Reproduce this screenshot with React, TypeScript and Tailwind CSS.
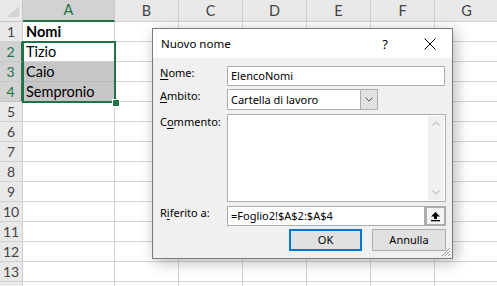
import React from "react";

const COLS = ["A", "B", "C", "D", "E", "F", "G"];
const ROWS = Array.from({ length: 14 }, (_, i) => i + 1);

function U({ children }: { children: React.ReactNode }) {
  return <span className="underline underline-offset-2 decoration-1">{children}</span>;
}

function Sheet() {
  const cellText: Record<number, string> = { 1: "Nomi", 2: "Tizio", 3: "Caio", 4: "Sempronio" };
  return (
    <div className="grid grid-cols-[23px_92px_64px_64px_64px_64px_64px_64px] grid-rows-[22px_repeat(14,20px)] font-['Lato',sans-serif] text-[14.5px] text-black">
      <div className="relative bg-[#e9e9e9] border-r border-b border-[#c6c6c6]">
        <div className="absolute right-[3px] bottom-[4px] w-0 h-0 border-l-[12px] border-l-transparent border-b-[11px] border-b-[#d4d4d4]" />
      </div>
      {COLS.map((c) => (
        <div
          key={c}
          className={
            c === "A"
              ? "flex items-center justify-center bg-[#d2d2d2] text-[#217346] border-r border-[#c6c6c6] border-b-2 border-b-[#217346]"
              : "flex items-center justify-center bg-[#e9e9e9] text-[#444] border-r border-b border-[#d0d0d0]"
          }
        >
          {c}
        </div>
      ))}
      {ROWS.map((r) => {
        const sel = r >= 2 && r <= 4;
        return (
          <React.Fragment key={r}>
            <div
              className={
                sel
                  ? "flex items-center justify-center bg-[#d2d2d2] text-[#217346] border-b border-[#c6c6c6] border-r-2 border-r-[#217346] text-[14px]"
                  : "flex items-center justify-center bg-[#e9e9e9] text-[#444] border-r border-b border-[#d0d0d0] text-[14px]"
              }
            >
              {r <= 13 ? r : ""}
            </div>
            {COLS.map((c) => {
              const isA = c === "A";
              const shade = isA && (r === 3 || r === 4);
              return (
                <div
                  key={c}
                  className={
                    shade
                      ? "flex items-center pl-[3px] bg-[#c6c6c6] border-r border-b border-[#b8b8b8] whitespace-nowrap"
                      : "flex items-center pl-[3px] bg-white border-r border-b border-[#d4d4d4] whitespace-nowrap"
                  }
                >
                  {isA && cellText[r] ? (
                    <span className={r === 1 ? "font-bold" : ""}>{cellText[r]}</span>
                  ) : null}
                </div>
              );
            })}
          </React.Fragment>
        );
      })}
    </div>
  );
}

function Dialog() {
  return (
    <div className="absolute left-[152px] top-[28px] w-[301px] h-[231px] border border-[#7a7a7a] bg-[#f0f0f0] shadow-[3px_3px_14px_rgba(0,0,0,0.28)] flex flex-col font-['Noto_Sans',sans-serif] text-[11px] text-black leading-[14px]">
      <div className="h-[29px] bg-white flex items-center pl-[8px] shrink-0">
        <span className="text-[11.5px]">Nuovo nome</span>
        <span className="ml-auto mr-[36px] text-[13px]">?</span>
        <svg width="12" height="12" viewBox="0 0 12 12" className="mr-[16px]">
          <path d="M0.5 0.5 L11.5 11.5 M11.5 0.5 L0.5 11.5" stroke="#000" strokeWidth="1" />
        </svg>
      </div>
      <div className="relative flex-1 flex flex-col pt-[8px] pl-[7px] pr-[6px]">
        <div className="flex h-[20px]">
          <div className="w-[67px]">
            <U>N</U>ome:
          </div>
          <div className="w-[218px] h-[20px] border border-[#adadad] bg-white pl-[3px] flex items-center">ElencoNomi</div>
        </div>
        <div className="flex h-[21px] mt-[3px]">
          <div className="w-[67px]">
            <U>A</U>mbito:
          </div>
          <div className="w-[151px] h-[21px] border border-[#adadad] bg-white flex">
            <div className="flex-1 pl-[3px] flex items-center">Cartella di lavoro</div>
            <div className="w-[17px] h-full bg-[#e1e1e1] border-l border-[#adadad] flex items-center justify-center">
              <svg width="8" height="5" viewBox="0 0 8 5">
                <path d="M0.5 0.5 L4 4 L7.5 0.5" fill="none" stroke="#555" strokeWidth="1" />
              </svg>
            </div>
          </div>
        </div>
        <div className="flex h-[88px] mt-[4px]">
          <div className="w-[67px] pt-[1px]">
            C<U>o</U>mmento:
          </div>
          <div className="w-[219px] h-[88px] border border-[#adadad] bg-white flex justify-end p-[1px]">
            <div className="w-[16px] h-full bg-[#f0f0f0] flex flex-col justify-between items-center py-[5px]">
              <svg width="8" height="5" viewBox="0 0 8 5">
                <path d="M0.5 4.5 L4 1 L7.5 4.5" fill="none" stroke="#c2c2c2" strokeWidth="1.2" />
              </svg>
              <svg width="8" height="5" viewBox="0 0 8 5">
                <path d="M0.5 0.5 L4 4 L7.5 0.5" fill="none" stroke="#c2c2c2" strokeWidth="1.2" />
              </svg>
            </div>
          </div>
        </div>
        <div className="flex h-[20px] mt-[4px]">
          <div className="w-[67px]">
            R<U>i</U>ferito a:
          </div>
          <div className="w-[198px] h-[20px] border border-[#adadad] bg-white pl-[3px] flex items-center">=Foglio2!$A$2:$A$4</div>
          <div className="w-[21px] h-[20px] border-2 border-[#adadad] bg-[#f4f4f4] flex items-center justify-center">
            <svg width="11" height="11" viewBox="0 0 11 11">
              <path d="M5.5 1 L10 5.5 L7 5.5 L7 8 L4 8 L4 5.5 L1 5.5 Z" fill="#000" />
              <rect x="1" y="9" width="9" height="1.3" fill="#000" />
            </svg>
          </div>
        </div>
        <div className="flex justify-end gap-[10px] h-[22px] mt-[3px]">
          <div className="w-[73px] h-[22px] border-2 border-[#0078d7] bg-[#e1e1e1] flex items-center justify-center">OK</div>
          <div className="w-[74px] h-[22px] border border-[#adadad] bg-[#e1e1e1] flex items-center justify-center">Annulla</div>
        </div>
        <svg width="11" height="11" viewBox="0 0 11 11" className="absolute right-[1px] bottom-[1px]">
          <path d="M10 2 L2 10 M10 5 L5 10 M10 8 L8 10" stroke="#9a9a9a" strokeWidth="1" />
        </svg>
      </div>
    </div>
  );
}

export default function App() {
  return (
    <div className="relative w-[497px] h-[286px] overflow-hidden bg-white">
      <Sheet />
      <div className="absolute left-[22px] top-[41px] w-[94px] h-[62px] border-2 border-[#217346] pointer-events-none" />
      <div className="absolute left-[112px] top-[99px] w-[6px] h-[6px] bg-[#217346] border border-white box-content" />
      <Dialog />
    </div>
  );
}
